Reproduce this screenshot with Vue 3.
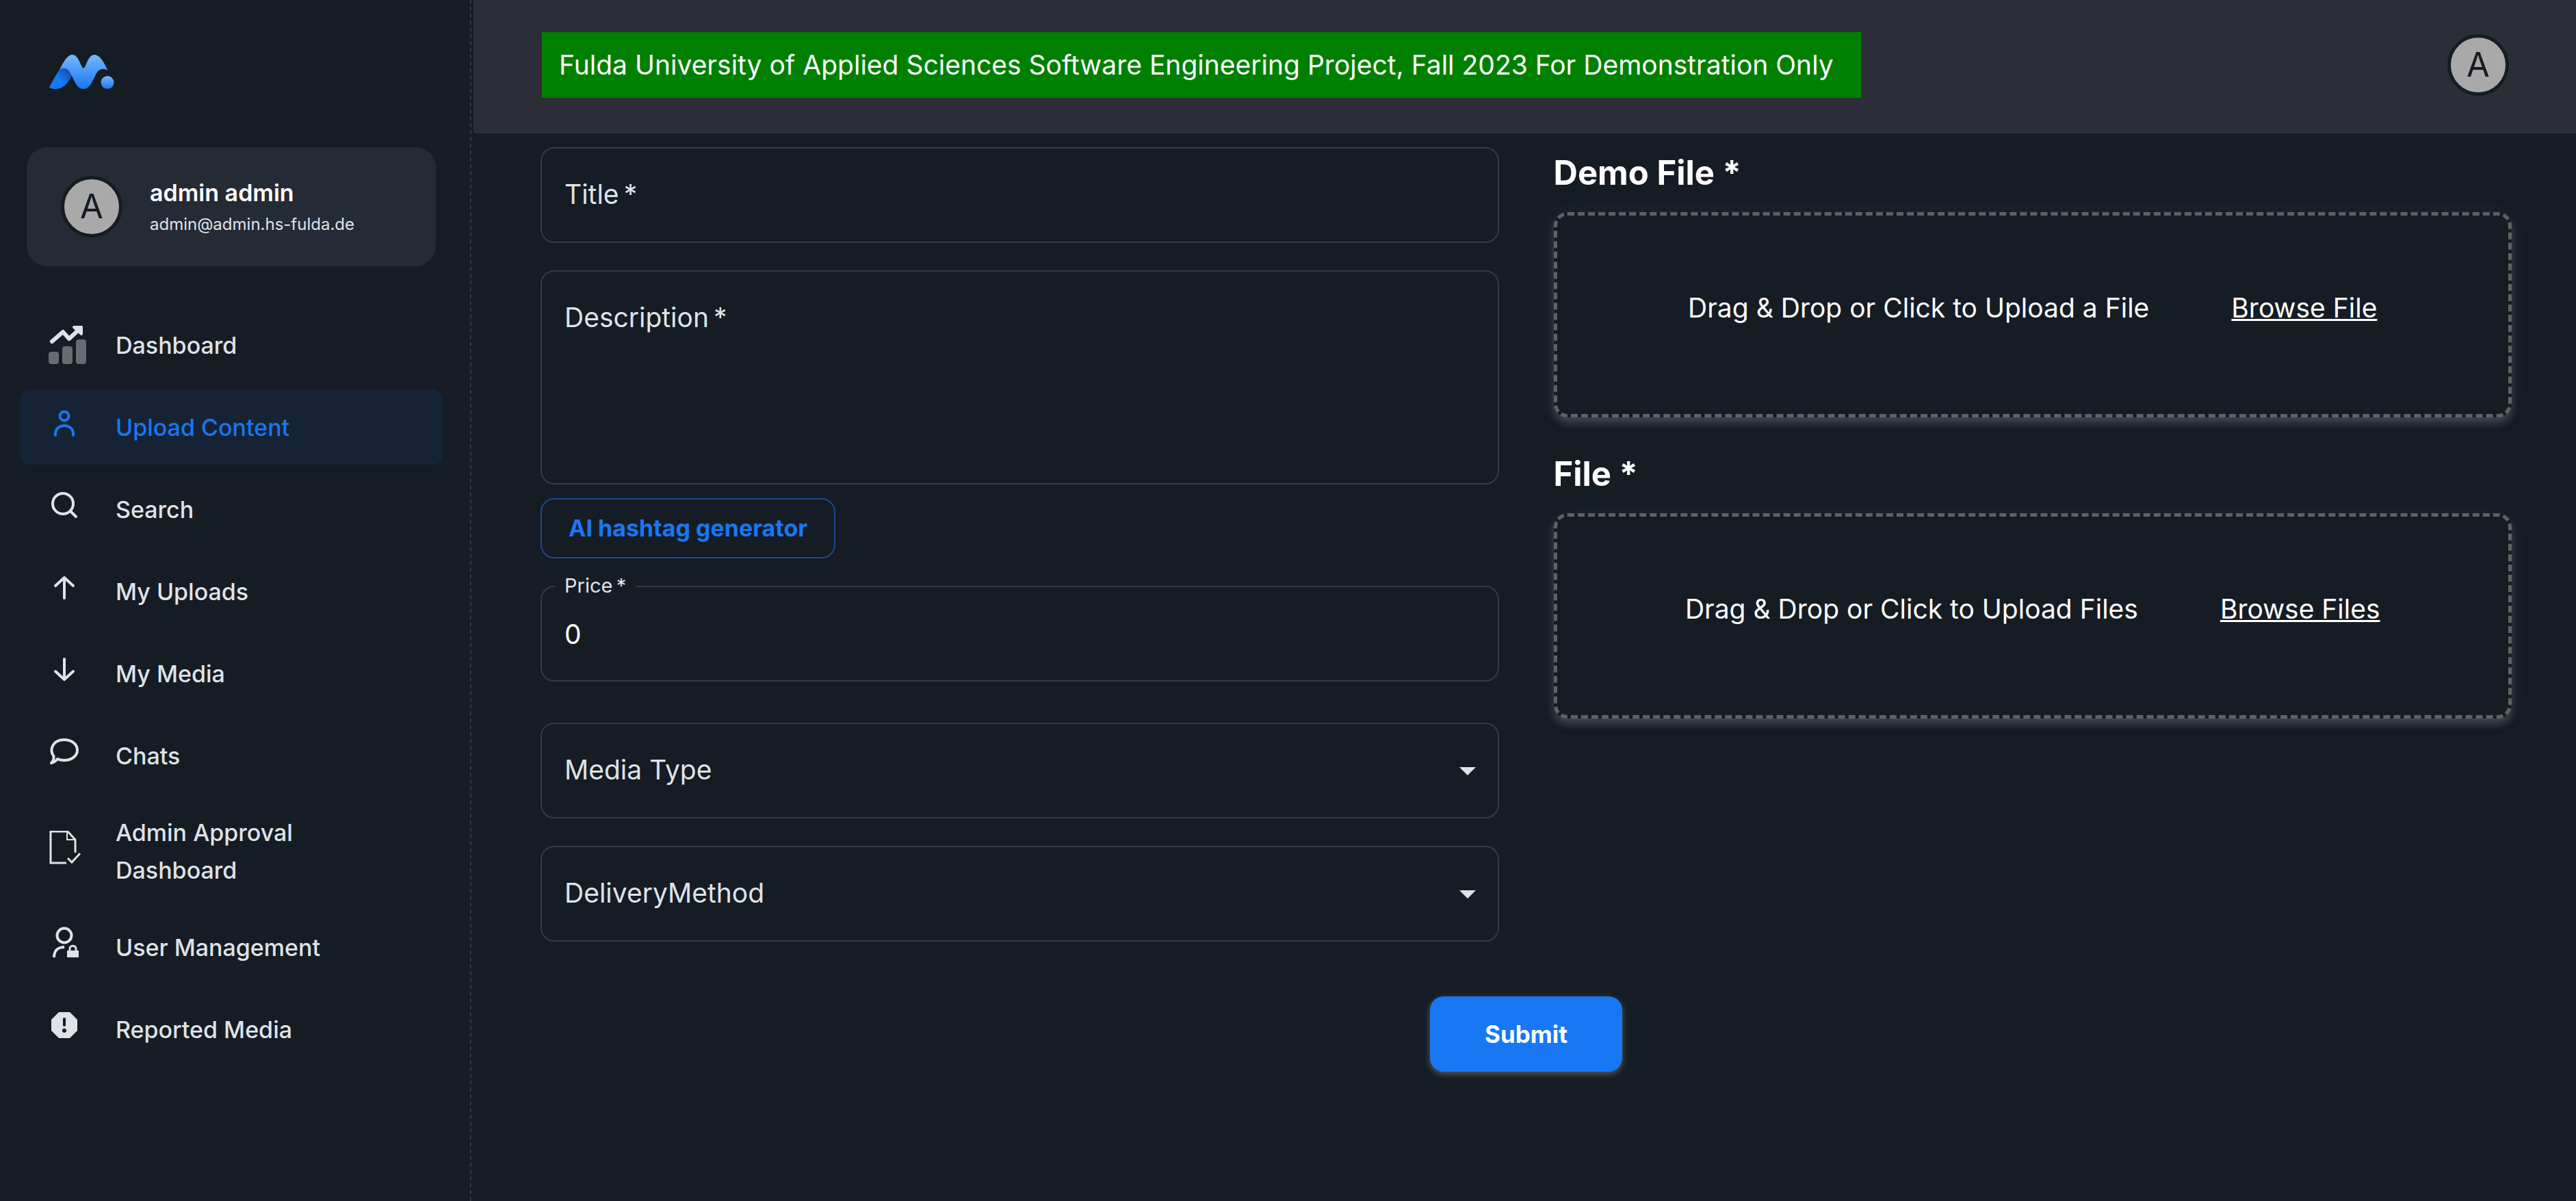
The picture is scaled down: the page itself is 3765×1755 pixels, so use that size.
<script setup>
import { ref } from 'vue'

const navItems = [
  { label: 'Dashboard', icon: 'chart' },
  { label: 'Upload Content', icon: 'person', active: true },
  { label: 'Search', icon: 'search' },
  { label: 'My Uploads', icon: 'up' },
  { label: 'My Media', icon: 'down' },
  { label: 'Chats', icon: 'chat' },
  { label: 'Admin Approval Dashboard', icon: 'approval' },
  { label: 'User Management', icon: 'userLock' },
  { label: 'Reported Media', icon: 'report' },
]

const uploads = [
  { id: 'demo-file', title: 'Demo File *', hint: 'Drag & Drop or Click to Upload a File', action: 'Browse File' },
  { id: 'files', title: 'File *', hint: 'Drag & Drop or Click to Upload Files', action: 'Browse Files', multiple: true },
]

const title = ref('')
const description = ref('')
const price = ref('0')
const mediaType = ref('')
const deliveryMethod = ref('')
</script>

<template>
  <div class="layout">
    <aside class="sidebar">
      <a class="logo" href="#" aria-label="Home">
        <svg viewBox="0 0 95 50" width="95" height="50">
          <defs>
            <linearGradient id="wave" x1="0" y1="0" x2="0" y2="1">
              <stop offset="0" stop-color="#76b8fc" />
              <stop offset="1" stop-color="#1877f2" />
            </linearGradient>
            <linearGradient id="tail" x1="0.95" y1="0.1" x2="0.45" y2="0.5">
              <stop offset="0" stop-color="#1048a8" />
              <stop offset="1" stop-color="#1877f2" />
            </linearGradient>
          </defs>
          <path fill="url(#tail)" d="M0 47.500C5 38 10 29 15 21.500C22 16 30 22 33 30C28 42 20 50 9 50C5 50 2 49.500 0 47.500Z" />
          <path fill="url(#wave)" d="M15 21.500C22 8 27 0 34 0C41 0 44 10 47 16C49 20.500 51 20.500 53 16C56 9 59 0 66 0C74 0 80 11 85.500 23C79 19 73 20 69 27C64 36 60 50 50 50C40 50 37 38 32 29C28 20 22 18 15 21.500Z" />
          <circle fill="url(#wave)" cx="85" cy="40.500" r="9.500" />
        </svg>
      </a>

      <div class="account">
        <span class="avatar">A</span>
        <div class="who">
          <strong class="name">admin admin</strong>
          <span class="email">admin@admin.hs-fulda.de</span>
        </div>
      </div>

      <nav class="nav">
        <a v-for="item in navItems" :key="item.label" href="#" class="nav-item" :class="{ active: item.active }">
          <svg class="nav-icon" viewBox="0 0 60 60" width="60" height="60" fill="none" stroke="currentColor" stroke-width="4" stroke-linecap="round" stroke-linejoin="round">
            <g v-if="item.icon === 'chart'">
              <g fill="currentColor" stroke="none" opacity="0.4">
                <rect x="1" y="40" width="15" height="18" rx="4" />
                <rect x="21" y="32" width="15" height="26" rx="4" />
                <rect x="41" y="22" width="15" height="36" rx="4" />
              </g>
              <path stroke-width="6" d="M6 25L22 11L31 21L45 8" />
              <path fill="currentColor" stroke-width="4" d="M38 4H49V14Z" />
            </g>
            <g v-else-if="item.icon === 'person'">
              <circle cx="24" cy="14" r="6.500" />
              <path d="M11 42V40C11 24 37 24 37 40V42" />
            </g>
            <g v-else-if="item.icon === 'search'">
              <circle cx="22" cy="22" r="15" />
              <path d="M33 33L41 41" />
            </g>
            <path v-else-if="item.icon === 'up'" d="M24 40V10M11 22L24 10L37 22" />
            <path v-else-if="item.icon === 'down'" d="M24 9V39M11 27L24 39L37 27" />
            <g v-else-if="item.icon === 'chat'">
              <path d="M24 7C34 7 43 13 43 22C43 31 34 37 24 37C20 37 17 36.500 14 35C12 38 9 40 5 41C8 38 9 35 8.500 31C2 22 6 7 24 7Z" />
            </g>
            <g v-else-if="item.icon === 'approval'" stroke-width="3" stroke-linecap="butt" stroke-linejoin="miter">
              <path d="M27 47H4V1H29L40 13V32" />
              <path stroke-width="2" d="M28 1V13H40" />
              <path d="M29 40L35 46L47 33" />
            </g>
            <g v-else-if="item.icon === 'userLock'" stroke-linecap="butt">
              <circle cx="24" cy="13" r="10.500" />
              <path d="M9 45C9 34 16 30 24 30" />
              <path fill="currentColor" stroke="none" d="M28 35H45V45H28Z" />
              <path stroke-width="3" d="M32 36V32C32 27 41 27 41 32V36" />
            </g>
            <g v-else stroke="none">
              <path fill="currentColor" d="M16 5H32L43 16V32L32 43H16L5 32V16Z" />
              <path stroke="#161c24" d="M24 15V24" />
              <circle fill="#161c24" cx="24" cy="32" r="3" />
            </g>
          </svg>
          <span>{{ item.label }}</span>
        </a>
      </nav>
    </aside>

    <div class="content">
      <header class="topbar">
        <p class="notice">Fulda University of Applied Sciences Software Engineering Project, Fall 2023 For Demonstration Only</p>
        <button type="button" class="avatar" aria-label="Account">A</button>
      </header>

      <form class="form" @submit.prevent>
        <div class="columns">
          <div class="fields">
            <div class="field">
              <input id="title" v-model="title" type="text" required />
              <label for="title">Title&thinsp;*</label>
            </div>
            <div class="field">
              <textarea id="description" v-model="description" required></textarea>
              <label for="description">Description&thinsp;*</label>
            </div>
            <button type="button" class="outlined">AI hashtag generator</button>
            <div class="field price">
              <input id="price" v-model="price" type="text" inputmode="decimal" required />
              <label for="price" class="raised">Price&thinsp;*</label>
            </div>
            <div class="field">
              <select id="media-type" v-model="mediaType">
                <option value=""></option>
              </select>
              <label for="media-type">Media Type</label>
              <svg class="caret" viewBox="0 0 24 12" width="24" height="12"><path fill="currentColor" d="M0 0H24L12 12Z" /></svg>
            </div>
            <div class="field">
              <select id="delivery-method" v-model="deliveryMethod">
                <option value=""></option>
              </select>
              <label for="delivery-method">DeliveryMethod</label>
              <svg class="caret" viewBox="0 0 24 12" width="24" height="12"><path fill="currentColor" d="M0 0H24L12 12Z" /></svg>
            </div>
          </div>

          <div class="uploads">
            <section v-for="upload in uploads" :key="upload.id" class="upload">
              <h2>{{ upload.title }}</h2>
              <div class="dropzone">
                <label :for="upload.id">{{ upload.hint }}</label>
                <input :id="upload.id" class="file-input" type="file" :multiple="upload.multiple" />
                <a href="#">{{ upload.action }}</a>
              </div>
            </section>
          </div>
        </div>
        <button type="submit" class="submit">Submit</button>
      </form>
    </div>
  </div>
</template>

<style>
body {
  background: #161c24;
}
</style>

<style scoped>
.layout,
.layout * {
  box-sizing: border-box;
}

.layout {
  display: flex;
  min-height: 100vh;
  background: #161c24;
  color: #fff;
  font-family: Inter, "Liberation Sans", sans-serif;
  font-size: 39px;
  line-height: 60px;
}

button,
input,
textarea,
select {
  font: inherit;
  color: inherit;
}

.sidebar {
  flex: 0 0 689px;
  border-right: 2px dashed #2f3843;
}

.logo {
  display: flex;
  margin: 80px 0 85px 72px;
  width: 95px;
}

.account {
  display: flex;
  align-items: center;
  gap: 40px;
  margin: 0 50px 60px 39px;
  padding: 39px 50px;
  border-radius: 30px;
  background: #252b35;
}

.avatar {
  display: flex;
  flex: none;
  align-items: center;
  justify-content: center;
  width: 90px;
  height: 90px;
  padding: 0;
  border: 5px solid #161c24;
  border-radius: 50%;
  background: #a9a9a9;
  color: #161c24;
  font-size: 49px;
}

.who {
  display: flex;
  flex-direction: column;
  padding-top: 4px;
}

.name {
  font-size: 34px;
  font-weight: 600;
  line-height: 48px;
}

.email {
  color: #dfe3e8;
  font-size: 24px;
  line-height: 44px;
}

.nav {
  display: flex;
  flex-direction: column;
  gap: 10px;
  margin: 0 40px 0 29px;
}

.nav-item {
  display: flex;
  align-items: center;
  gap: 39px;
  min-height: 110px;
  padding: 20px 41px;
  border-radius: 15px;
  color: #dfe3e8;
  font-size: 34px;
  font-weight: 500;
  line-height: 55px;
  text-decoration: none;
}

.nav-item.active {
  background: #162334;
  color: #1877f2;
}

.nav-icon {
  flex: none;
}

.content {
  flex: 1;
  min-width: 0;
  padding-left: 3px;
}

.topbar {
  display: flex;
  align-items: center;
  justify-content: space-between;
  min-height: 195px;
  padding: 0 98px 5px 100px;
  background: #2b2e37;
}

.notice {
  margin: 0;
  padding: 18px 40px 18px 25px;
  background: #008000;
}

.form {
  display: flex;
  flex-direction: column;
  align-items: center;
  gap: 80px;
  padding: 20px 94px 80px 98px;
}

.columns {
  display: grid;
  grid-template-columns: 1fr 1fr;
  gap: 80px;
  width: 100%;
}

.fields {
  display: flex;
  flex-direction: column;
  gap: 40px;
}

.field {
  position: relative;
  display: flex;
}

.field input,
.field textarea,
.field select {
  width: 100%;
  height: 140px;
  margin: 0;
  padding: 0 33px;
  border: 2px solid #333b46;
  border-radius: 20px;
  background: transparent;
  appearance: none;
  resize: none;
}

.field textarea {
  height: 313px;
  padding: 38px 33px;
}

.field label {
  position: absolute;
  top: 39px;
  left: 35px;
  color: #dfe3e8;
  pointer-events: none;
}

.field .raised {
  top: -20px;
  left: 21px;
  padding: 0 14px;
  background: #161c24;
  font-size: 29px;
  line-height: 40px;
}

.price {
  margin-bottom: 20px;
}

.caret {
  position: absolute;
  top: 65px;
  right: 34px;
  color: #dfe3e8;
  pointer-events: none;
}

.outlined {
  align-self: flex-start;
  margin: -20px 0 0;
  padding: 14px 39px;
  border: 2px solid #174b92;
  border-radius: 20px;
  background: transparent;
  color: #1877f2;
  font-size: 34px;
  font-weight: 700;
  line-height: 56px;
}

.uploads {
  display: flex;
  flex-direction: column;
  gap: 45px;
}

.upload h2 {
  margin: 0 0 20px;
  font-size: 49px;
  font-weight: 700;
  line-height: 75px;
}

.dropzone {
  display: flex;
  align-items: center;
  justify-content: center;
  gap: 120px;
  height: 300px;
  padding-bottom: 20px;
  border: 5px dashed #616161;
  border-radius: 20px;
  background: #161c24;
  box-shadow: 0 8px 12px rgba(145, 158, 171, 0.3), 0 0 24px rgba(80, 70, 110, 0.2);
}

.dropzone a {
  color: inherit;
  text-decoration: underline;
}

.file-input {
  position: absolute;
  width: 1px;
  height: 1px;
  opacity: 0;
  pointer-events: none;
}

.submit {
  padding: 25px 80px;
  border: 0;
  border-radius: 20px;
  background: #1877f2;
  font-size: 35px;
  font-weight: 700;
  box-shadow: 0 4px 8px rgba(200, 200, 200, 0.3), 0 0 16px rgba(145, 158, 171, 0.1);
}
</style>
